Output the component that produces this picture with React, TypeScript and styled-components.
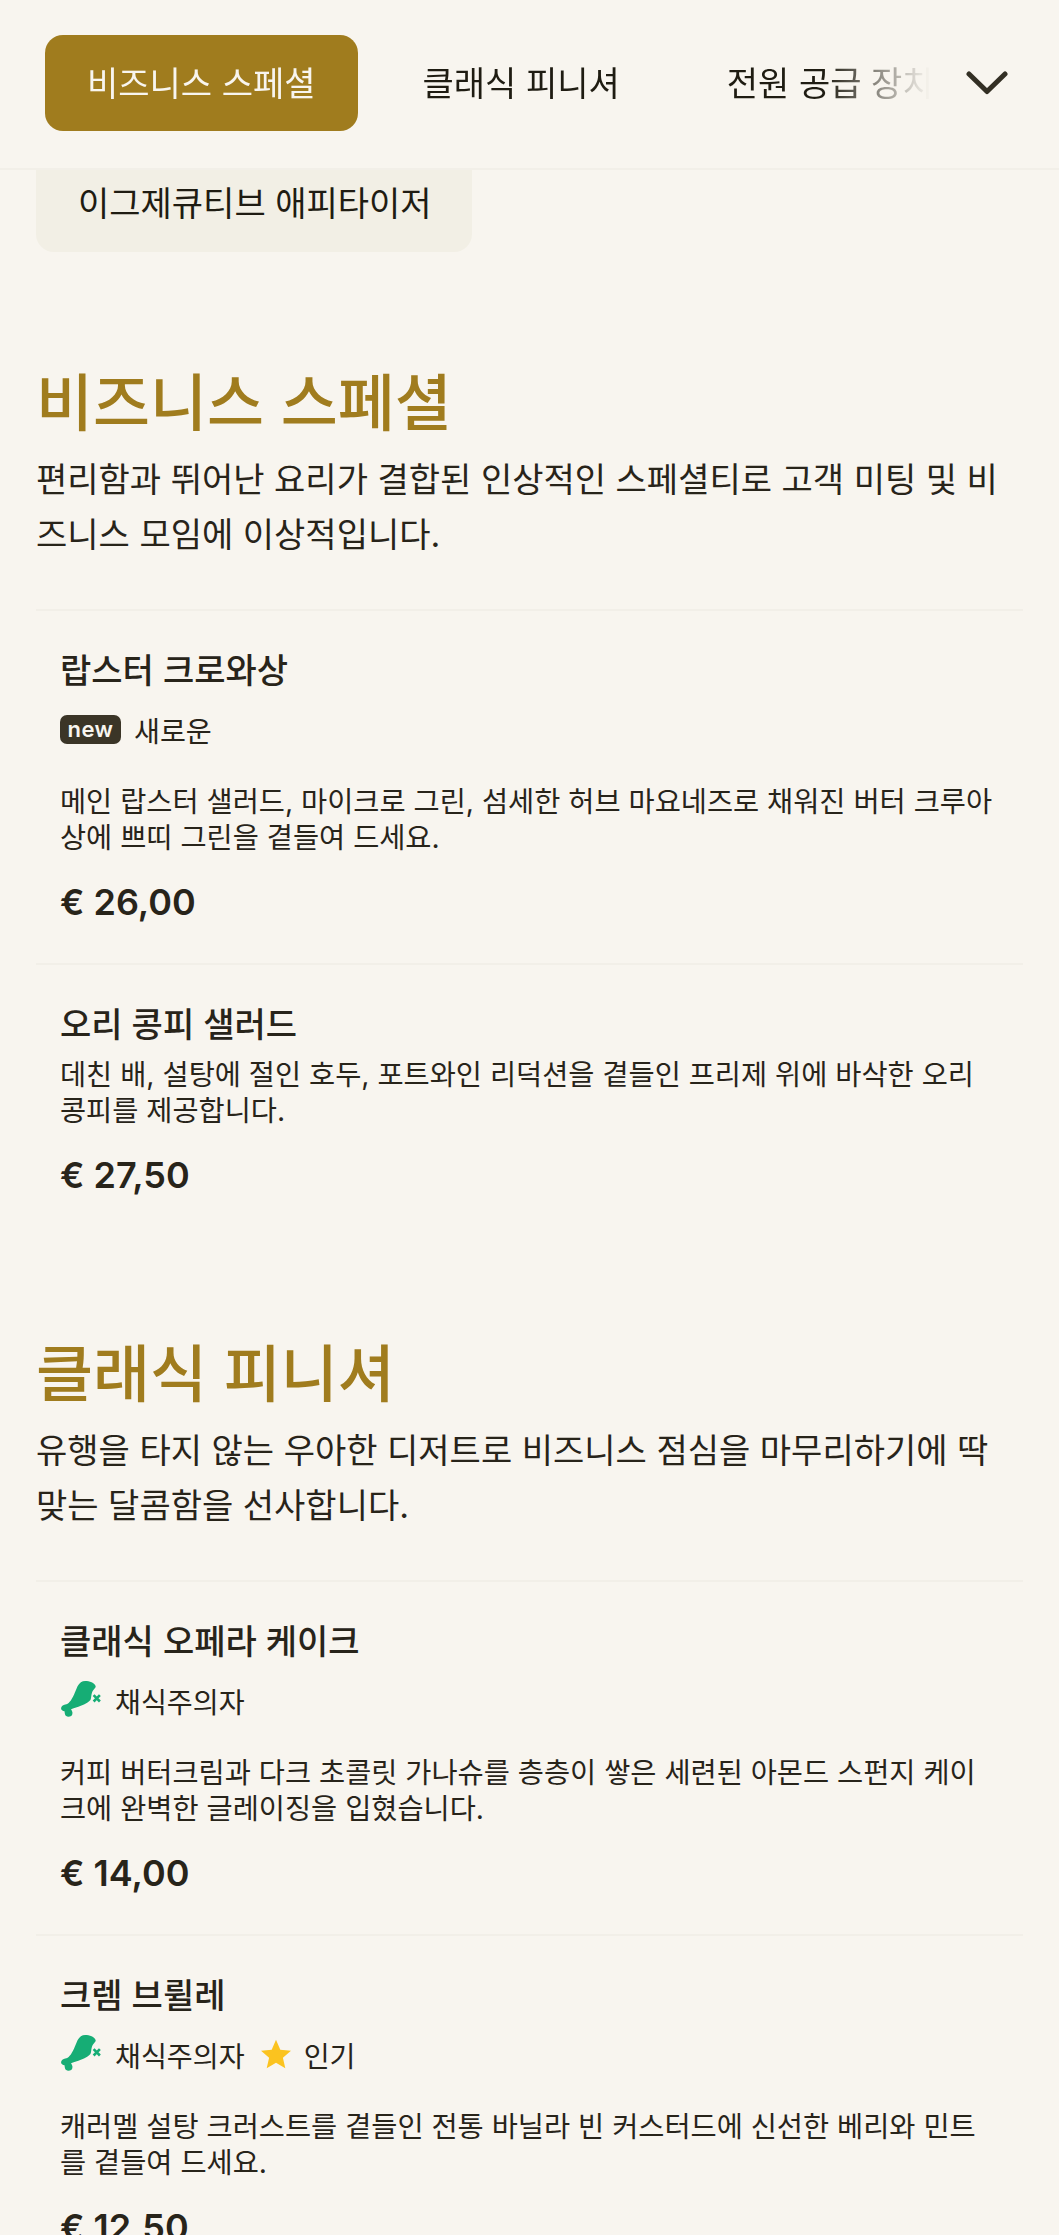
import React from "react";
import styled, { createGlobalStyle } from "styled-components";

const GlobalStyle = createGlobalStyle`
  html, body {
    margin: 0;
    padding: 0;
    background: #f8f5ef;
    color: #28241a;
    font-family: "Inter", "Noto Sans CJK KR", sans-serif;
    height: 2235px;
    overflow: hidden;
  }
  * { box-sizing: border-box; }
`;

interface Dish {
  name: string;
  desc: string;
  price: string;
  isNew?: boolean;
  vegetarian?: boolean;
  popular?: boolean;
}

interface MenuSection {
  title: string;
  intro: string;
  dishes: Dish[];
}

const sections: MenuSection[] = [
  {
    title: "비즈니스 스페셜",
    intro:
      "편리함과 뛰어난 요리가 결합된 인상적인 스페셜티로 고객 미팅 및 비즈니스 모임에 이상적입니다.",
    dishes: [
      {
        name: "랍스터 크로와상",
        desc: "메인 랍스터 샐러드, 마이크로 그린, 섬세한 허브 마요네즈로 채워진 버터 크루아상에 쁘띠 그린을 곁들여 드세요.",
        price: "€ 26,00",
        isNew: true,
      },
      {
        name: "오리 콩피 샐러드",
        desc: "데친 배, 설탕에 절인 호두, 포트와인 리덕션을 곁들인 프리제 위에 바삭한 오리 콩피를 제공합니다.",
        price: "€ 27,50",
      },
    ],
  },
  {
    title: "클래식 피니셔",
    intro:
      "유행을 타지 않는 우아한 디저트로 비즈니스 점심을 마무리하기에 딱 맞는 달콤함을 선사합니다.",
    dishes: [
      {
        name: "클래식 오페라 케이크",
        desc: "커피 버터크림과 다크 초콜릿 가나슈를 층층이 쌓은 세련된 아몬드 스펀지 케이크에 완벽한 글레이징을 입혔습니다.",
        price: "€ 14,00",
        vegetarian: true,
      },
      {
        name: "크렘 브륄레",
        desc: "캐러멜 설탕 크러스트를 곁들인 전통 바닐라 빈 커스터드에 신선한 베리와 민트를 곁들여 드세요.",
        price: "€ 12,50",
        vegetarian: true,
        popular: true,
      },
    ],
  },
];

const DrumstickIcon = () => (
  <svg width="42" height="38" viewBox="-1 0 40 36.200" fill="none">
    <path
      d="M15.700 5C17.500 1.500 20 0 23 0C27 0 32 1.500 33 5C33 7 30.500 8 29.500 11C28.500 14 29 16 28 18C25 21.500 19 23.500 15 25C13 25.800 11 26 9.500 27C11 29 11.500 31.500 10 33C8 34.500 4.500 34.500 3.800 32C3.500 31 3.500 29.800 3.300 28.800C1.500 28.800 0 27.500 0 26C0 24.300 2 23 4 22.500C5.500 22 7.200 21.500 8 20C10 18 11 15.500 12.300 13C13.500 10.500 14.500 7.500 15.700 5Z"
      fill="#16ad75"
    />
    <path
      d="M31 13.500l6 6M37 13.500L31 19.500"
      stroke="#16ad75"
      strokeWidth="2.500"
    />
  </svg>
);

const StarIcon = () => (
  <svg width="30" height="30" viewBox="0 0 30 30">
    <path
      d="M15 .8l4.300 9.900 10.700 1-8.100 7.100 2.400 10.500L15 23.800l-9.300 5.500 2.400-10.500L0 11.700l10.700-1z"
      fill="#fbc31f"
    />
  </svg>
);

const App: React.FunctionComponent = () => {
  return (
    <Page>
      <GlobalStyle />
      <NavBar>
        <TabList>
          <Tab active>비즈니스 스페셜</Tab>
          <Tab>클래식 피니셔</Tab>
          <Tab>전원 공급 장치</Tab>
        </TabList>
        <ChevronButton>
          <svg width="42" height="24" viewBox="0 0 42 24" fill="none">
            <path
              d="M3 3L21 20.500L39 3"
              stroke="#332f24"
              strokeWidth="5"
              strokeLinecap="round"
              strokeLinejoin="round"
            />
          </svg>
        </ChevronButton>
      </NavBar>

      <Content>
        <Chip>이그제큐티브 애피타이저</Chip>
        {sections.map((section) => (
          <Section key={section.title}>
            <SectionTitle>{section.title}</SectionTitle>
            <SectionIntro>{section.intro}</SectionIntro>
            {section.dishes.map((dish) => (
              <Item key={dish.name}>
                <ItemName>{dish.name}</ItemName>
                {(dish.isNew || dish.vegetarian || dish.popular) && (
                  <Tags>
                    {dish.isNew && (
                      <Tag>
                        <NewBadge>new</NewBadge>
                        새로운
                      </Tag>
                    )}
                    {dish.vegetarian && (
                      <Tag>
                        <DrumstickIcon />
                        채식주의자
                      </Tag>
                    )}
                    {dish.popular && (
                      <Tag>
                        <StarIcon />
                        인기
                      </Tag>
                    )}
                  </Tags>
                )}
                <ItemDesc>{dish.desc}</ItemDesc>
                <ItemPrice>{dish.price}</ItemPrice>
              </Item>
            ))}
          </Section>
        ))}
      </Content>
    </Page>
  );
};

const Page = styled.div`
  width: 1059px;
  height: 2235px;
  overflow: hidden;
`;

const NavBar = styled.nav`
  display: flex;
  align-items: center;
  justify-content: space-between;
  height: 170px;
  padding: 0 51px 2px 45px;
  border-bottom: 2px solid #f2efe8;
`;

const TabList = styled.div`
  display: flex;
  gap: 23px;
  width: 885px;
  overflow: hidden;
  -webkit-mask-image: linear-gradient(90deg, #000 88%, transparent 100%);
  mask-image: linear-gradient(90deg, #000 88%, transparent 100%);
`;

const Tab = styled.div<{ active?: boolean }>`
  flex: none;
  height: 96px;
  display: flex;
  align-items: center;
  padding: 0 42px 3px;
  border-radius: 18px;
  font-size: 34px;
  font-weight: 400;
  white-space: nowrap;
  background: ${(props) => (props.active ? "#a07c1e" : "transparent")};
  color: ${(props) => (props.active ? "#f8f5ef" : "#1f1c12")};
`;

const ChevronButton = styled.div`
  display: flex;
  align-items: center;
`;

const Content = styled.main`
  padding: 0 36px;
`;

const Chip = styled.div`
  display: flex;
  align-items: center;
  width: 436px;
  height: 82px;
  padding: 0 0 20px 42px;
  background: #f2efe5;
  border-radius: 0 0 18px 18px;
  font-size: 34px;
  font-weight: 400;
  color: #1f1c12;
  white-space: nowrap;
`;

const Section = styled.section`
  margin-top: 112px;
  & + & {
    margin-top: 99px;
  }
`;

const SectionTitle = styled.h2`
  margin: 0;
  font-size: 62px;
  line-height: 80px;
  font-weight: 500;
  color: #a07c1e;
`;

const SectionIntro = styled.p`
  margin: 8px 0 47px;
  font-size: 34px;
  line-height: 55px;
  font-weight: 400;
`;

const Item = styled.article`
  padding: 38px 24px;
  border-top: 2px solid #f2efe8;
`;

const ItemName = styled.h3`
  margin: 0;
  font-size: 34px;
  line-height: 44px;
  font-weight: 500;
`;

const Tags = styled.div`
  display: flex;
  align-items: center;
  gap: 16px;
  height: 28px;
  margin: 22px 0 41px;
`;

const Tag = styled.span`
  display: inline-flex;
  align-items: center;
  gap: 13px;
  font-size: 28.2px;
  font-weight: 400;

  & > svg:only-of-type {
    flex: none;
  }
`;

const NewBadge = styled.span`
  display: inline-flex;
  align-items: center;
  justify-content: center;
  width: 61px;
  height: 29px;
  border-radius: 7px;
  background: #3b3527;
  color: #f8f5ef;
  font-size: 22px;
  letter-spacing: 0.5px;
  font-weight: 600;
`;

const ItemDesc = styled.p`
  margin: 10px 0 0;
  font-size: 28.4px;
  line-height: 36px;
  font-weight: 400;
`;

const ItemPrice = styled.div`
  margin-top: 23px;
  font-size: 36px;
  line-height: 46px;
  font-weight: 600;
`;

export default App;
